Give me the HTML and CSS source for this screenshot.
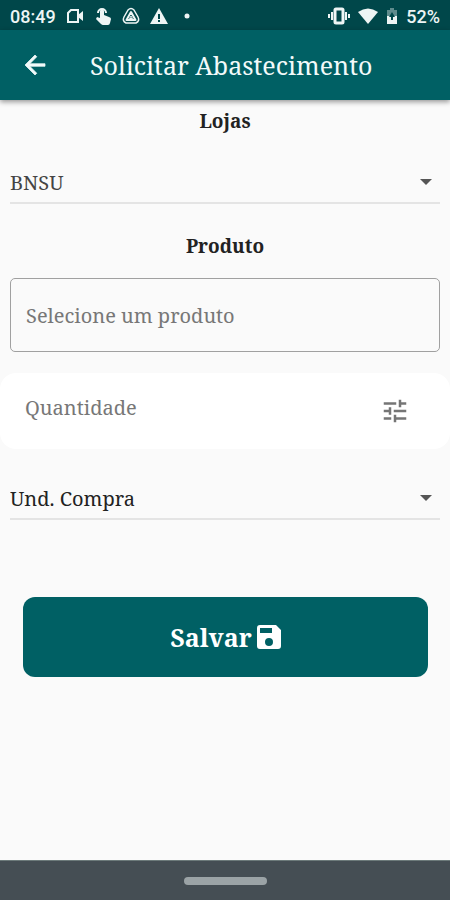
FILE: index.html
```html
<!DOCTYPE html>
<html lang="pt-BR">
<head>
<meta charset="utf-8">
<meta name="viewport" content="width=device-width, initial-scale=1">
<title>Solicitar Abastecimento</title>
<link rel="stylesheet" href="styles.css">
</head>
<body>
<div class="status-bar">
  <span class="clock">08:49</span>
  <div class="status-icons">
    <svg class="status-icon" viewBox="0 0 18 18" fill="none" stroke="currentColor" stroke-width="2"><path d="M5 3h7v12H2V6z"/><path d="M12 8l5-4v10l-5-4z" fill="currentColor" stroke="none"/></svg>
    <svg class="status-icon" viewBox="0 0 18 18" fill="currentColor"><path d="M6 9V4a2 2 0 0 1 4 0v4l5 2q2 .5 2 2l-1 4q-.4 2-2 2H9q-1 0-2-1l-5-5 1-2 3 1z"/><path d="M4 6a4 4 0 1 1 8 0" fill="none" stroke="currentColor" stroke-width="2"/></svg>
    <svg class="status-icon" viewBox="0 0 18 18" fill="none" stroke="currentColor" stroke-linejoin="round"><path d="M6 3q3-3 6 0l4 7q2 4-2 6H4q-4-2-2-6z" stroke-width="1.500"/><path d="M9 5l4.500 8h-9z" stroke-width="2"/><path d="M9 9l1.500 2.500h-3z"/></svg>
    <svg class="status-icon" viewBox="0 0 18 18" fill="currentColor"><path fill-rule="evenodd" d="M9 1l9 16H0zM8 7v5h2V7zm0 6v2h2v-2z"/></svg>
    <svg class="status-icon" viewBox="0 0 18 18" fill="currentColor"><circle cx="9" cy="9" r="2.500"/></svg>
  </div>
  <div class="system-icons">
    <svg class="vibrate-icon" viewBox="0 0 22 18" fill="none" stroke="currentColor" stroke-width="2"><rect x="7" y="2" width="8" height="14" rx="1" stroke-width="3"/><path d="M4 5v8M18 5v8M1 7v4M21 7v4"/></svg>
    <svg class="wifi-icon" viewBox="0 0 20 18" fill="currentColor"><path d="M0 5q10-7 20 0L10 17z"/></svg>
    <svg class="battery-icon" viewBox="0 0 12 18" fill="currentColor"><path opacity=".4" d="M4 1h4v2h3v6H1V3h3z"/><path d="M1 9h10v8H1z"/><path d="M6 5l3 5H7v3H5v-3H3z" fill="#00474a"/></svg>
    <span class="battery-level">52%</span>
  </div>
</div>
<header class="app-bar">
  <button class="back" type="button" aria-label="Voltar">
    <svg class="icon" viewBox="0 0 24 24" fill="currentColor" stroke="currentColor" stroke-width=".6"><path d="M20 11H7.830l5.590-5.590L12 4l-8 8 8 8 1.410-1.410L7.830 13H20z"/></svg>
  </button>
  <h1 class="title">Solicitar Abastecimento</h1>
</header>
<main class="content">
  <form class="form">
    <label class="heading" for="loja">Lojas</label>
    <div class="dropdown">
      <select class="select store" id="loja"><option>BNSU</option></select>
      <svg class="caret" viewBox="0 0 12 6" fill="currentColor"><path d="M0 0h12L6 6z"/></svg>
    </div>
    <label class="heading heading-product" for="produto">Produto</label>
    <input class="product" id="produto" type="text" placeholder="Selecione um produto">
    <div class="quantity">
      <input class="quantity-input" type="text" inputmode="numeric" placeholder="Quantidade" aria-label="Quantidade">
      <svg class="icon tune" viewBox="0 0 24 24" fill="currentColor"><path d="M3 17v2h6v-2H3zM3 5v2h10V5H3zm10 16v-2h8v-2h-8v-2h-2v6h2zM7 9v2H3v2h4v2h2V9H7zm14 4v-2H11v2h10zm-6-4h2V7h4V5h-4V3h-2v6z"/></svg>
    </div>
    <div class="dropdown dropdown-unit">
      <select class="select" aria-label="Unidade de compra"><option>Und. Compra</option></select>
      <svg class="caret" viewBox="0 0 12 6" fill="currentColor"><path d="M0 0h12L6 6z"/></svg>
    </div>
    <button class="save" type="button">Salvar<svg class="save-icon" viewBox="0 0 24 24" fill="currentColor"><path fill-rule="evenodd" d="M3 0h16l5 5v16a3 3 0 0 1-3 3H3a3 3 0 0 1-3-3V3a3 3 0 0 1 3-3zM3 3v5h12V3zM12 13a4 4 0 1 0 0 8 4 4 0 0 0 0-8z"/></svg></button>
  </form>
</main>
<footer class="nav-bar"><div class="nav-handle"></div></footer>
</body>
</html>
```
FILE: styles.css
```css
* {
  box-sizing: border-box;
}

body {
  margin: 0;
  min-height: 100vh;
  display: flex;
  flex-direction: column;
  background: #fafafa;
  color: #222;
  font-family: "Noto Serif", "DejaVu Serif Condensed", "DejaVu Serif", serif;
  font-size: 20px;
}

button,
input,
select {
  font: inherit;
  color: inherit;
  border: 0;
  padding: 0;
  border-radius: 0;
  background: none;
}

svg {
  flex: none;
  display: block;
}

.status-bar {
  display: flex;
  align-items: center;
  height: 30px;
  padding: 2px 10px 0;
  background: #00474a;
  color: #eef5f5;
  font-family: Roboto, sans-serif;
  font-size: 18px;
  font-weight: 500;
}

.status-icons,
.system-icons {
  display: flex;
  align-items: center;
  gap: 10px;
}

.status-icons {
  margin-left: 10px;
}

.system-icons {
  gap: 8px;
  margin-left: auto;
}

.status-icon {
  width: 18px;
  height: 18px;
}

.vibrate-icon {
  width: 22px;
  height: 18px;
}

.wifi-icon {
  width: 20px;
  height: 18px;
}

.battery-icon {
  width: 12px;
  height: 18px;
}

.app-bar {
  display: flex;
  align-items: center;
  height: 70px;
  padding: 0 20px;
  gap: 40px;
  background: #006064;
  color: #f2fafa;
  box-shadow: 0 2px 5px rgba(0, 0, 0, 0.4);
}

.icon {
  width: 30px;
  height: 30px;
}

.title {
  margin: 0;
  font-size: 25px;
  font-weight: 400;
  white-space: nowrap;
}

.content {
  flex: 1;
}

.form {
  display: flex;
  flex-direction: column;
}

.heading {
  margin-top: 8px;
  line-height: 26px;
  font-size: 19px;
  font-weight: 700;
  text-align: center;
}

.heading-product {
  margin-top: 29px;
}

.dropdown {
  display: flex;
  align-items: center;
  height: 42px;
  margin: 28px 10px 0;
  border-bottom: 2px solid #e4e4e4;
}

.dropdown-unit {
  margin-top: 29px;
}

.select {
  flex: 1;
  height: 40px;
  appearance: none;
}

.store {
  color: #444;
}

.caret {
  width: 12px;
  height: 6px;
  margin-left: -20px;
  margin-right: 8px;
  color: #555;
  pointer-events: none;
}

.product {
  height: 74px;
  margin: 19px 10px 0;
  padding: 0 15px;
  border: 1px solid #a0a0a0;
  border-radius: 5px;
}

.product::placeholder,
.quantity-input::placeholder {
  color: #777;
  opacity: 1;
}

.quantity {
  display: flex;
  align-items: center;
  height: 76px;
  margin-top: 21px;
  padding: 0 40px 0 25px;
  border-radius: 16px;
  background: #fff;
}

.quantity-input {
  flex: 1;
  min-width: 0;
  height: 76px;
  padding-bottom: 8px;
}

.tune {
  color: #757575;
}

.save {
  display: flex;
  align-items: center;
  justify-content: center;
  gap: 5px;
  height: 80px;
  margin: 77px 22px 0 23px;
  border-radius: 12px;
  background: #006064;
  color: #fff;
  font-size: 25px;
  font-weight: 700;
}

.save-icon {
  width: 24px;
  height: 24px;
}

.nav-bar {
  display: flex;
  align-items: center;
  justify-content: center;
  height: 40px;
  background: #454e54;
  border-top: 1px solid #6c7a7a;
}

.nav-handle {
  width: 83px;
  height: 8px;
  border-radius: 4px;
  background: #9ba3a6;
}
```
